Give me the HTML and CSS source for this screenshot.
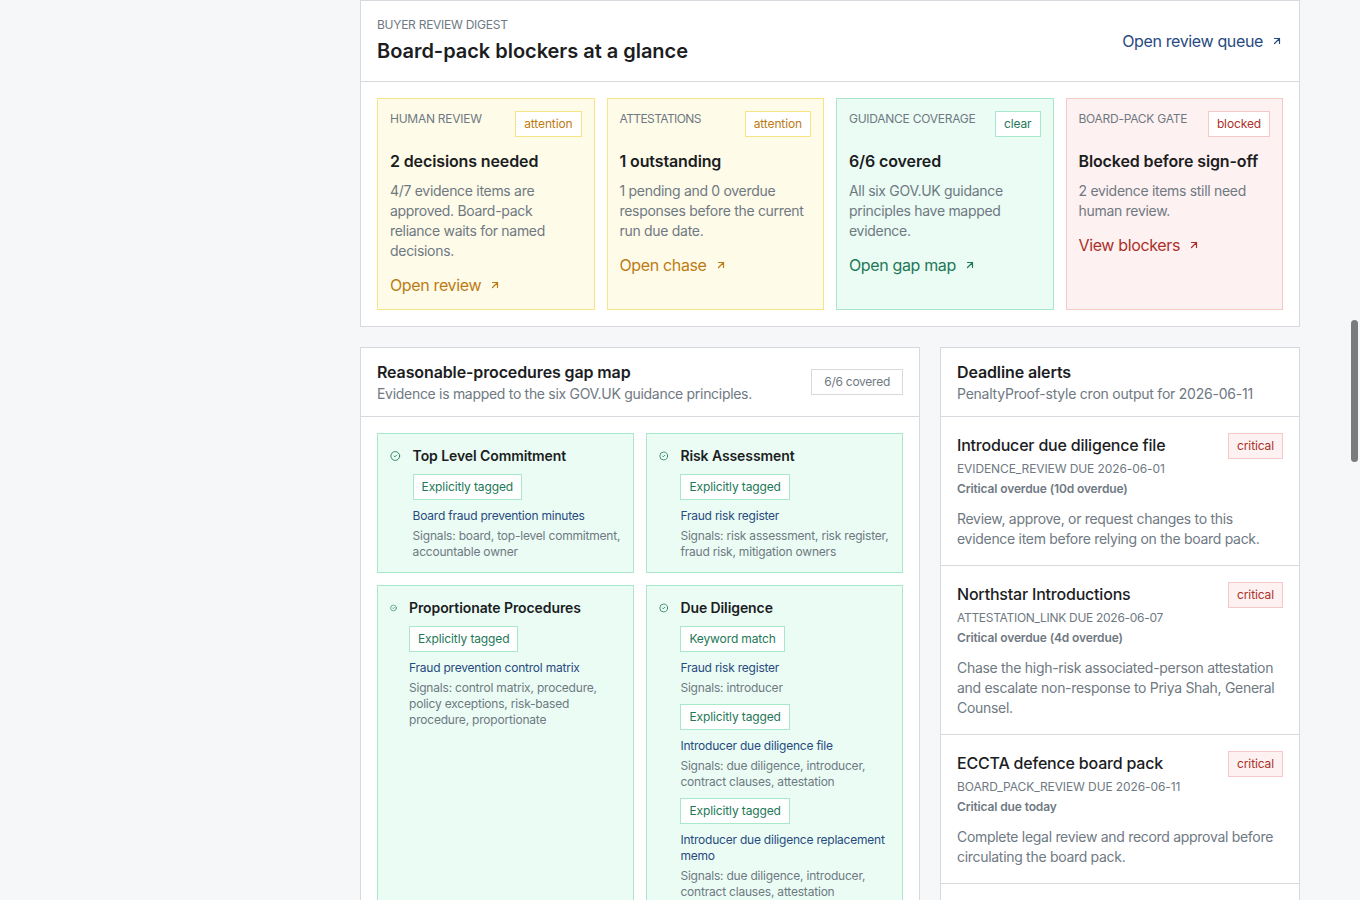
FILE: index.html
```html
<!DOCTYPE html>
<html lang="en">
<head>
    <meta charset="UTF-8">
    <meta name="viewport" content="width=device-width, initial-scale=1.0">
    <title>Board-pack blockers</title>
    <link rel="stylesheet" href="styles.css">
</head>
<body>

    <!-- Shared icons -->
    <svg class="sprite" aria-hidden="true">
        <symbol id="arrow" viewBox="0 0 24 24"><path d="M7 7h10v10M7 17 17 7"/></symbol>
        <symbol id="check" viewBox="0 0 24 24"><circle cx="12" cy="12" r="10"/><path d="m9 12 2 2 4-4"/></symbol>
    </svg>

    <main>
        <!-- Review digest -->
        <section class="panel digest">
            <header class="digest-header">
                <div>
                    <p class="eyebrow">BUYER REVIEW DIGEST</p>
                    <h1>Board-pack blockers at a glance</h1>
                </div>
                <a class="link" href="#">Open review queue <svg><use href="#arrow"/></svg></a>
            </header>
            <div class="digest-grid">
                <article class="card attention">
                    <div class="card-top"><p class="eyebrow">HUMAN REVIEW</p><span class="badge">attention</span></div>
                    <h3>2 decisions needed</h3>
                    <p class="text">4/7 evidence items are<br>approved. Board-pack<br>reliance waits for named<br>decisions.</p>
                    <a class="link" href="#">Open review <svg><use href="#arrow"/></svg></a>
                </article>
                <article class="card attention">
                    <div class="card-top"><p class="eyebrow tight">ATTESTATIONS</p><span class="badge">attention</span></div>
                    <h3>1 outstanding</h3>
                    <p class="text">1 pending and 0 overdue<br>responses before the current<br>run due date.</p>
                    <a class="link" href="#">Open chase <svg><use href="#arrow"/></svg></a>
                </article>
                <article class="card clear">
                    <div class="card-top"><p class="eyebrow">GUIDANCE COVERAGE</p><span class="badge">clear</span></div>
                    <h3>6/6 covered</h3>
                    <p class="text">All six GOV.UK guidance<br>principles have mapped<br>evidence.</p>
                    <a class="link" href="#">Open gap map <svg><use href="#arrow"/></svg></a>
                </article>
                <article class="card blocked">
                    <div class="card-top"><p class="eyebrow">BOARD-PACK GATE</p><span class="badge">blocked</span></div>
                    <h3>Blocked before sign-off</h3>
                    <p class="text">2 evidence items still need<br>human review.</p>
                    <a class="link" href="#">View blockers <svg><use href="#arrow"/></svg></a>
                </article>
            </div>
        </section>

        <div class="columns">
            <!-- Gap map -->
            <section class="panel">
                <header class="panel-header">
                    <div>
                        <h2>Reasonable-procedures gap map</h2>
                        <p class="text">Evidence is mapped to the six GOV.UK guidance principles.</p>
                    </div>
                    <span class="badge count">6/6 covered</span>
                </header>
                <div class="gap-grid">
                    <article class="card clear principle">
                        <svg class="icon"><use href="#check"/></svg>
                        <div>
                            <h4>Top Level Commitment</h4>
                            <div class="evidence">
                                <span class="badge">Explicitly tagged</span>
                                <a href="#">Board fraud prevention minutes</a>
                                <p>Signals: board, top-level commitment,<br>accountable owner</p>
                            </div>
                        </div>
                    </article>
                    <article class="card clear principle">
                        <svg class="icon icon-md"><use href="#check"/></svg>
                        <div>
                            <h4>Risk Assessment</h4>
                            <div class="evidence">
                                <span class="badge">Explicitly tagged</span>
                                <a href="#">Fraud risk register</a>
                                <p>Signals: risk assessment, risk register,<br>fraud risk, mitigation owners</p>
                            </div>
                        </div>
                    </article>
                    <article class="card clear principle">
                        <svg class="icon icon-sm"><use href="#check"/></svg>
                        <div>
                            <h4>Proportionate Procedures</h4>
                            <div class="evidence">
                                <span class="badge">Explicitly tagged</span>
                                <a href="#">Fraud prevention control matrix</a>
                                <p>Signals: control matrix, procedure,<br>policy exceptions, risk-based<br>procedure, proportionate</p>
                            </div>
                        </div>
                    </article>
                    <article class="card clear principle">
                        <svg class="icon icon-md"><use href="#check"/></svg>
                        <div>
                            <h4>Due Diligence</h4>
                            <div class="evidence">
                                <span class="badge">Keyword match</span>
                                <a href="#">Fraud risk register</a>
                                <p>Signals: introducer</p>
                            </div>
                            <div class="evidence">
                                <span class="badge">Explicitly tagged</span>
                                <a href="#">Introducer due diligence file</a>
                                <p>Signals: due diligence, introducer,<br>contract clauses, attestation</p>
                            </div>
                            <div class="evidence">
                                <span class="badge">Explicitly tagged</span>
                                <a href="#">Introducer due diligence replacement<br>memo</a>
                                <p>Signals: due diligence, introducer,<br>contract clauses, attestation</p>
                            </div>
                        </div>
                    </article>
                </div>
            </section>

            <!-- Deadlines -->
            <section class="panel">
                <header class="panel-header">
                    <div>
                        <h2>Deadline alerts</h2>
                        <p class="text run-date">PenaltyProof-style cron output for 2026-06-11</p>
                    </div>
                </header>
                <article class="alert">
                    <div class="alert-top">
                        <div>
                            <h3>Introducer due diligence file</h3>
                            <p class="eyebrow">EVIDENCE_REVIEW DUE 2026-06-01</p>
                            <p class="status">Critical overdue (10d overdue)</p>
                        </div>
                        <span class="badge critical">critical</span>
                    </div>
                    <p class="text">Review, approve, or request changes to this<br>evidence item before relying on the board pack.</p>
                </article>
                <article class="alert">
                    <div class="alert-top">
                        <div>
                            <h3>Northstar Introductions</h3>
                            <p class="eyebrow tight">ATTESTATION_LINK DUE 2026-06-07</p>
                            <p class="status">Critical overdue (4d overdue)</p>
                        </div>
                        <span class="badge critical">critical</span>
                    </div>
                    <p class="text">Chase the high-risk associated-person attestation<br>and escalate non-response to Priya Shah, General<br>Counsel.</p>
                </article>
                <article class="alert">
                    <div class="alert-top">
                        <div>
                            <h3>ECCTA defence board pack</h3>
                            <p class="eyebrow">BOARD_PACK_REVIEW DUE 2026-06-11</p>
                            <p class="status">Critical due today</p>
                        </div>
                        <span class="badge critical">critical</span>
                    </div>
                    <p class="text">Complete legal review and record approval before<br>circulating the board pack.</p>
                </article>
            </section>
        </div>
    </main>

    <div class="scroll-thumb"></div>

</body>
</html>
```

FILE: styles.css
```css
* {
    box-sizing: border-box;
}

body {
    margin: 0;
    height: 900px;
    overflow: hidden;
    background: #f5f7f9;
    color: #1b1d1f;
    font-family: Inter, "Liberation Sans", sans-serif;
    font-size: 16px;
    line-height: 24px;
}

h1, h2, h3, h4, p {
    margin: 0;
    white-space: nowrap;
}

a {
    color: #284a7e;
    text-decoration: none;
    white-space: nowrap;
}

svg {
    fill: none;
    stroke: currentColor;
    stroke-width: 2;
    stroke-linecap: round;
    stroke-linejoin: round;
    flex: none;
}

.sprite {
    display: none;
}

main {
    width: 940px;
    margin-left: 360px;
}

.panel {
    background: #fff;
    border: 1px solid #d6dade;
}

/* Text */
h1 {
    margin-top: 4px;
    font-size: 20px;
    line-height: 28px;
    font-weight: 600;
    letter-spacing: -0.03px;
}

h2, h3 {
    font-size: 16px;
    line-height: 24px;
    font-weight: 600;
    letter-spacing: -0.12px;
}

h4 {
    font-size: 14px;
    line-height: 20px;
    font-weight: 600;
    letter-spacing: -0.09px;
}

.eyebrow {
    font-size: 12px;
    line-height: 16px;
    color: #6f7982;
    letter-spacing: -0.26px;
}

.text {
    font-size: 14px;
    line-height: 20px;
    color: #6f7982;
    letter-spacing: -0.3px;
}

.run-date {
    letter-spacing: -0.23px;
}

.link {
    display: inline-flex;
    align-items: center;
    gap: 8px;
    letter-spacing: -0.36px;
}

.link svg {
    width: 12px;
    height: 12px;
    stroke-width: 2.4;
}

.badge {
    display: inline-block;
    padding: 4px 8px;
    border: 1px solid #d6dade;
    background: #fff;
    font-size: 12px;
    line-height: 16px;
    letter-spacing: -0.12px;
    white-space: nowrap;
}

/* Digest */
.digest-header {
    display: flex;
    justify-content: space-between;
    align-items: center;
    padding: 16px;
    border-bottom: 1px solid #d6dade;
}

.digest-grid {
    display: grid;
    grid-template-columns: repeat(4, 1fr);
    gap: 12px;
    padding: 16px;
}

.card {
    padding: 12px;
    border: 1px solid;
    min-width: 0;
}

.card-top {
    display: flex;
    justify-content: space-between;
    align-items: flex-start;
    margin-bottom: 12px;
}

.card-top .tight {
    letter-spacing: -0.6px;
}

.card .text {
    margin: 8px 0 12px;
}

.card .badge {
    border-color: inherit;
}

.card-top, .evidence, .principle > div {
    border-color: inherit;
}

.attention {
    background: #fefbe9;
    border-color: #f6e486;
}

.attention .badge, .attention .link {
    color: #bd7b14;
}

.clear {
    background: #eafcf4;
    border-color: #a9e8cb;
}

.clear .badge, .clear .link, .clear .icon {
    color: #237857;
}

.blocked {
    background: #fef1f1;
    border-color: #f6c9c9;
}

.blocked .badge, .blocked .link {
    color: #ab3029;
}

/* Lower columns */
.columns {
    display: grid;
    grid-template-columns: 560px 360px;
    gap: 20px;
    margin-top: 20px;
}

.panel-header {
    display: flex;
    justify-content: space-between;
    align-items: center;
    padding: 12px 16px;
    border-bottom: 1px solid #d6dade;
}

.count {
    padding: 4px 12px;
    color: #6f7982;
    letter-spacing: -0.26px;
}

.gap-grid {
    display: grid;
    grid-template-columns: 1fr 1fr;
    gap: 12px;
    padding: 16px;
}

.principle {
    display: flex;
    align-items: flex-start;
    gap: 12px;
}

.icon {
    width: 10.6px;
    height: 16px;
    margin-top: 2px;
}

.icon-md {
    width: 9.4px;
}

.icon-sm {
    width: 7px;
}

.evidence {
    margin-top: 8px;
    font-size: 12px;
    line-height: 16px;
}

.evidence .badge {
    display: block;
    width: fit-content;
}

.evidence a {
    display: block;
    margin: 8px 0 4px;
    letter-spacing: -0.22px;
}

.evidence p {
    color: #6f7982;
    letter-spacing: -0.2px;
}

/* Alerts */
.alert {
    padding: 16px;
    border-bottom: 1px solid #d6dade;
}

.alert h3 {
    font-weight: 500;
    letter-spacing: -0.2px;
}

.alert-top {
    display: flex;
    justify-content: space-between;
    align-items: flex-start;
    margin-bottom: 12px;
}

.alert .eyebrow {
    margin: 4px 0;
    letter-spacing: -0.1px;
}

.alert .tight {
    letter-spacing: -0.3px;
}

.status {
    font-size: 12px;
    line-height: 16px;
    font-weight: 600;
    color: #6f7982;
    letter-spacing: -0.13px;
}

.critical {
    background: #fef1f1;
    border-color: #f6c9c9;
    color: #ab3029;
}

/* Scrollbar thumb over the page edge */
.scroll-thumb {
    position: fixed;
    top: 320px;
    right: 2px;
    width: 7px;
    height: 142px;
    border-radius: 4px;
    background: #7b7b7b;
}
```
